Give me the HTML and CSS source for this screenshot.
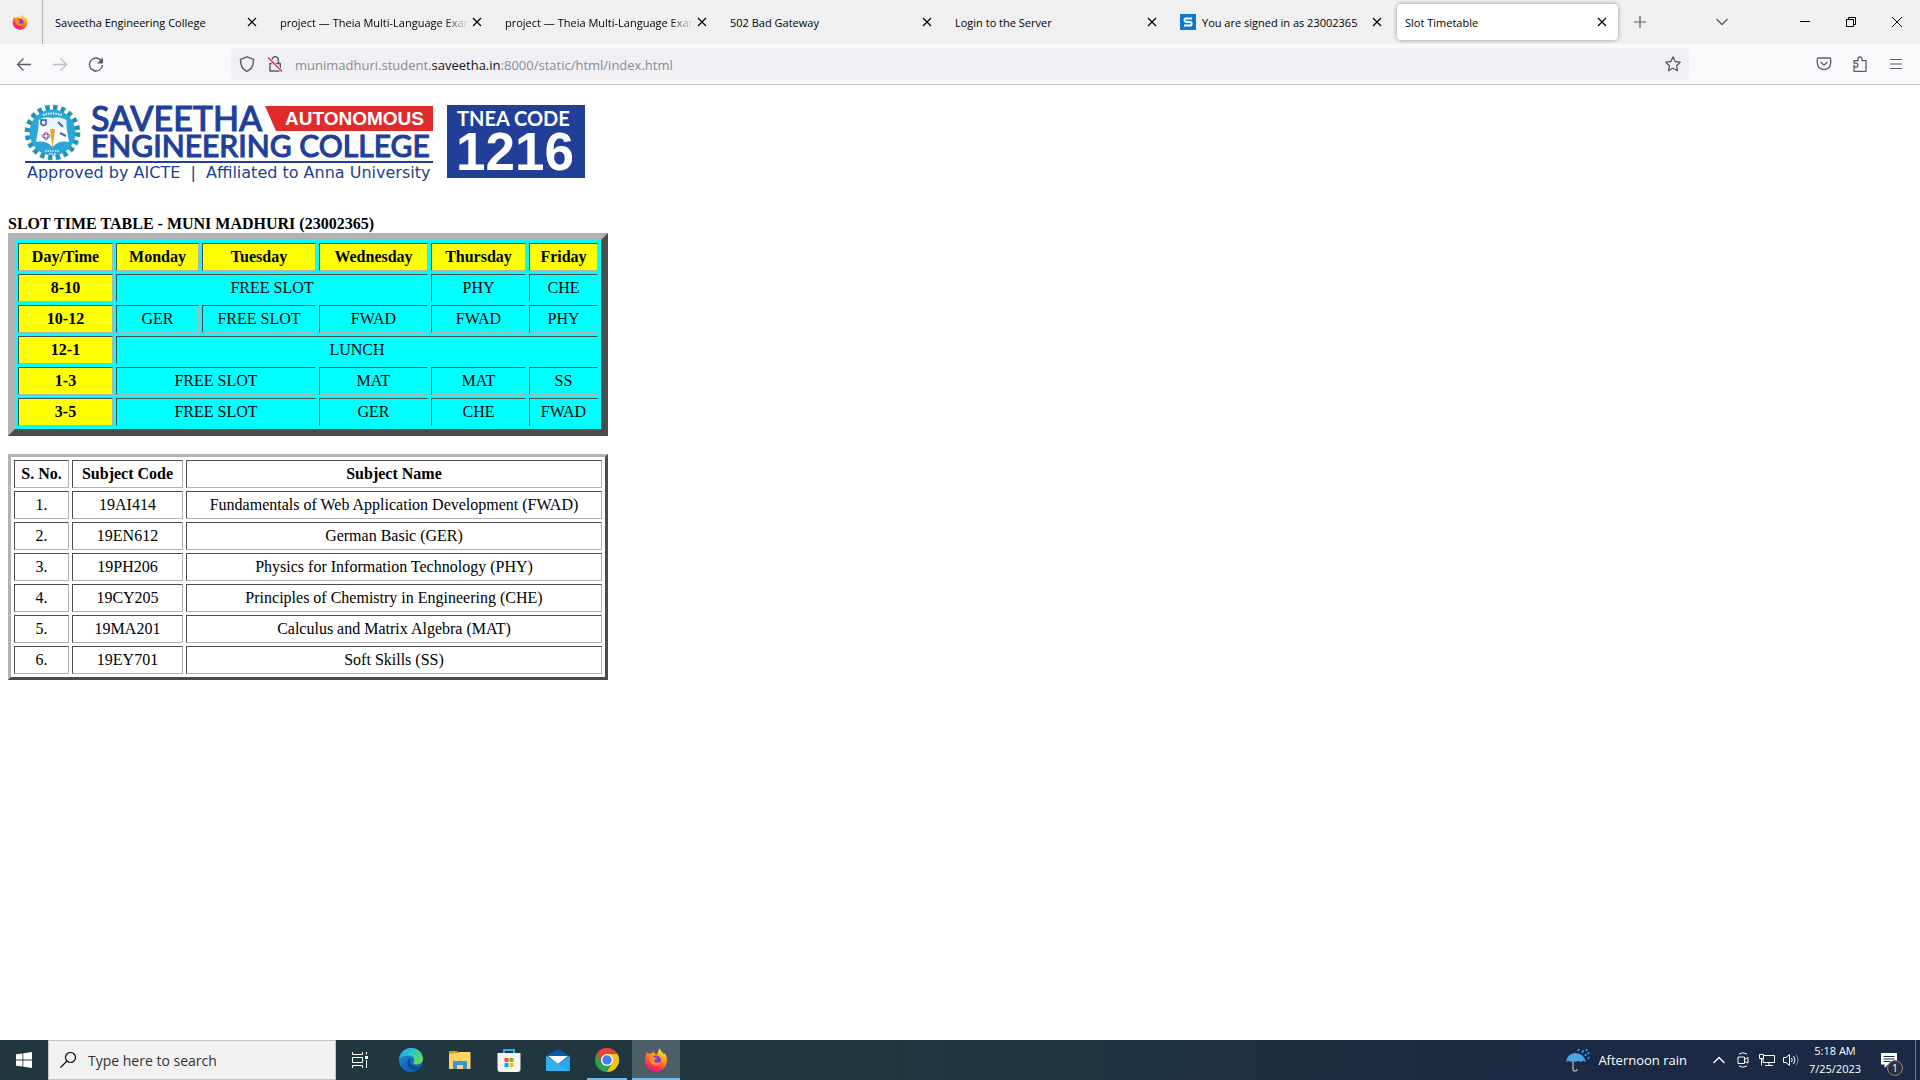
FILE: index.html
```html
<!DOCTYPE html>
<html lang="en">
<head>
<meta charset="utf-8">
<title>Slot Timetable</title>
<link rel="stylesheet" href="styles.css">
</head>
<body>
<svg class="defs" aria-hidden="true">
  <defs>
    <linearGradient id="fox" x1="0.8" y1="0" x2="0.3" y2="1"><stop offset="0" stop-color="#fff44f"/><stop offset="0.4" stop-color="#ff980e"/><stop offset="0.75" stop-color="#ff3750"/><stop offset="1" stop-color="#e31587"/></linearGradient>
    <linearGradient id="edge1" x1="0" y1="0" x2="1" y2="0.5"><stop offset="0" stop-color="#1b9de2"/><stop offset="0.5" stop-color="#2cc3d5"/><stop offset="1" stop-color="#62d957"/></linearGradient>
    <linearGradient id="edge2" x1="0" y1="0" x2="0.6" y2="1"><stop offset="0" stop-color="#1b8fdd"/><stop offset="1" stop-color="#0f5cb0"/></linearGradient>
    <symbol id="firefox" viewBox="0 0 24 24">
      <path fill="url(#fox)" d="M2 7c0-1 .8-2.400 1.500-3 0 1 .4 1.600 1 2 .9-.5 2-.6 3-.3C8 4.500 9 3.700 10 3.500 9.500 5 11 6 12.500 6.200c1 0 1.300-1.200 1.500-2.200.2-1.600.9-2.700 2-3.500.2 2 1.300 2.800 2.500 4 .7.700 1.300 1.400 1.600 2l.4-1.500c1.700 2 2.500 4.400 2.500 7.300C23 18.800 18.200 23.500 12 23.500S1 18.700 1 12.500C1 10.400 1.300 8.500 2 7z"/>
      <circle cx="12" cy="12.500" r="5" fill="#7a3ee0"/>
      <path fill="#ff8a1e" d="M5 8c2-.6 3.800 0 5 1.300 1.300.2 2.500.2 3 .7-.5 1.200-2 1.400-2.800 2.200-.2 1.700 1.300 2.800 3 2.500 1.500-.2 2.300-.8 3.300-.2-1 2.400-3 3.500-5.200 3.200C7.500 17.300 4.500 13 5 8z"/>
    </symbol>
    <symbol id="close" viewBox="0 0 10 10"><path d="M1 1l8 8M9 1L1 9" fill="none" stroke="currentColor" stroke-width="1.200"/></symbol>
  </defs>
</svg>

<header class="browser">
  <div class="tabbar">
    <button class="pinned" aria-label="Firefox View"><svg width="16" height="16"><use href="#firefox"/></svg></button>
    <div class="tab"><button class="tab-title">Saveetha Engineering College</button><button class="tab-close" aria-label="Close tab"><svg width="10" height="10"><use href="#close"/></svg></button></div>
    <div class="tab"><button class="tab-title faded">project — Theia Multi-Language Example</button><button class="tab-close" aria-label="Close tab"><svg width="10" height="10"><use href="#close"/></svg></button></div>
    <div class="tab"><button class="tab-title faded">project — Theia Multi-Language Example</button><button class="tab-close" aria-label="Close tab"><svg width="10" height="10"><use href="#close"/></svg></button></div>
    <div class="tab"><button class="tab-title">502 Bad Gateway</button><button class="tab-close" aria-label="Close tab"><svg width="10" height="10"><use href="#close"/></svg></button></div>
    <div class="tab"><button class="tab-title">Login to the Server</button><button class="tab-close" aria-label="Close tab"><svg width="10" height="10"><use href="#close"/></svg></button></div>
    <div class="tab"><svg class="tab-icon" width="16" height="16" viewBox="0 0 16 16"><path fill="#0a7bce" d="M0 0h16v16H0z"/><path d="M12 4.500H6q-1.500 0-1.500 1.500T6 7.900h4q1.600 0 1.600 1.800T10 11.500H4" fill="none" stroke="#fff" stroke-width="2"/></svg><button class="tab-title">You are signed in as 23002365</button><button class="tab-close" aria-label="Close tab"><svg width="10" height="10"><use href="#close"/></svg></button></div>
    <div class="tab active"><button class="tab-title">Slot Timetable</button><button class="tab-close" aria-label="Close tab"><svg width="10" height="10"><use href="#close"/></svg></button></div>
    <button class="icon-btn new-tab" aria-label="New tab"><svg width="12" height="12" viewBox="0 0 12 12"><path d="M6 0v12M0 6h12" stroke="#5b5b66" stroke-width="1.200"/></svg></button>
    <button class="icon-btn all-tabs" aria-label="List all tabs"><svg width="12" height="8" viewBox="0 0 12 8"><path d="M.5 1L6 6.500 11.500 1" fill="none" stroke="#5b5b66" stroke-width="1.300"/></svg></button>
    <div class="window-controls">
      <button aria-label="Minimize"><svg width="10" height="10" viewBox="0 0 10 10"><path d="M0 4.500h10" stroke="#000"/></svg></button>
      <button aria-label="Restore"><svg width="10" height="10" viewBox="0 0 10 10"><path d="M.5 2.500h7v7h-7zM2.500 2.500v-2h7v7h-2" fill="none" stroke="#000"/></svg></button>
      <button aria-label="Close"><svg width="10" height="10" viewBox="0 0 10 10"><path d="M0 0l10 10M10 0L0 10" stroke="#000"/></svg></button>
    </div>
  </div>
  <div class="toolbar">
    <div class="nav">
      <button class="icon-btn" aria-label="Back"><svg width="16" height="16" viewBox="0 0 16 16"><path d="M15 8.500H1.500M7.500 2.500l-6 6 6 6" fill="none" stroke="#5b5b66" stroke-width="1.300"/></svg></button>
      <button class="icon-btn" aria-label="Forward" disabled><svg width="16" height="16" viewBox="0 0 16 16"><path d="M1 8.500h13.500M8.500 2.500l6 6-6 6" fill="none" stroke="#bdbdc3" stroke-width="1.300"/></svg></button>
      <button class="icon-btn" aria-label="Reload"><svg width="16" height="16" viewBox="0 0 16 16"><path d="M13.500 5A6.500 6.500 0 1 0 14.500 9" fill="none" stroke="#5b5b66" stroke-width="1.400"/><path d="M15 1.500v6H9z" fill="#5b5b66"/></svg></button>
    </div>
    <div class="urlbar">
      <svg width="16" height="16" viewBox="0 0 16 16"><path d="M8 .8l6.500 2.500C14.700 8.500 13 13 8 15.300 3 13 1.300 8.500 1.500 3.300z" fill="none" stroke="#5b5b66" stroke-width="1.400" stroke-linejoin="round"/></svg>
      <svg width="16" height="16" viewBox="0 0 16 16"><path d="M3 7.500h10.300V15H3zM5 7.500V4a3.200 3.200 0 0 1 6.400 0v3.500" fill="none" stroke="#5b5b66" stroke-width="1.400" stroke-linejoin="round"/><path d="M1 1.500l14 14" stroke="#f0f0f4" stroke-width="3"/><path d="M1 1.500l14 14" stroke="#e22850" stroke-width="1.300"/></svg>
      <div class="url" role="textbox" aria-label="Address" contenteditable="true" spellcheck="false">munimadhuri.student.<span class="domain">saveetha.in</span>:8000/static/html/index.html</div>
      <button class="icon-btn star" aria-label="Bookmark this page"><svg width="16" height="16" viewBox="0 0 16 16"><path d="M8 .9l2.200 4.600 5 .7-3.600 3.500.9 5L8 12.300l-4.500 2.400.9-5L.8 6.200l5-.7z" fill="none" stroke="#5b5b66" stroke-width="1.300" stroke-linejoin="round"/></svg></button>
    </div>
    <div class="tools">
      <button class="icon-btn" aria-label="Save to Pocket"><svg width="16" height="16" viewBox="0 0 16 16"><path d="M2.500 2h11q1.200 0 1.200 1.200V7a6.700 6.700 0 0 1-13.400 0V3.200Q1.300 2 2.500 2z" fill="none" stroke="#5b5b66" stroke-width="1.300"/><path d="M4.500 6L8 9.200 11.500 6" fill="none" stroke="#5b5b66" stroke-width="1.300"/></svg></button>
      <button class="icon-btn" aria-label="Extensions"><svg width="16" height="16" viewBox="0 0 16 16"><path d="M2 8.800V15.300H14V4.700H10V3a2 2 0 0 0-4 0V4.700H2V7.200H4a1.900 1.900 0 0 1 0 3.800H2" fill="none" stroke="#5b5b66" stroke-width="1.300" stroke-linejoin="round"/></svg></button>
      <button class="icon-btn" aria-label="Open application menu"><svg width="12" height="12" viewBox="0 0 12 12"><path d="M0 1.500h12M0 6h12M0 10.500h12" stroke="#5b5b66" stroke-width="1.200"/></svg></button>
    </div>
  </div>
</header>

<main class="page">
  <svg class="logo" viewBox="0 0 600 122" role="img" aria-label="Saveetha Engineering College">
    <circle cx="44.500" cy="39.500" r="25" fill="none" stroke="#8fcb6b" stroke-width="6" stroke-dasharray="4.500 3.354"/>
    <circle cx="44.500" cy="39.500" r="24.700" fill="none" stroke="#1f8fc6" stroke-width="5.400" stroke-dasharray="3.900 3.860"/>
    <circle cx="44.500" cy="39.500" r="23" fill="#2ba6d8"/>
    <path d="M31 32q7-3 13.500 3 6.500-6 13.500-3l3 17q-10-2-16.500 5-6.500-7-16.500-5z" fill="#fff"/>
    <path d="M44.500 25q-7-2-14 2v7q7-3 14 2 7-5 14-2v-7q-7-4-14-2z" fill="#e6f3f8"/>
    <path d="M33 27h5v4q-2.500 3-5 0z" fill="none" stroke="#2556a0" stroke-width="1.400"/>
    <ellipse cx="38" cy="43" rx="4" ry="2" fill="none" stroke="#8750a2"/><ellipse cx="38" cy="43" rx="2" ry="4" fill="none" stroke="#8750a2"/>
    <path d="M50 29l5 5m-3 6l6 3" stroke="#3c6bb0" stroke-width="2"/>
    <path d="M42 36h5l-1 8-1.500 12L43 44z" fill="#f1a32c"/>
    <path d="M35 22q9.500-3 19 0" fill="none" stroke="#e8f6fb" stroke-width="2" stroke-dasharray="1.500 1"/>
    <path d="M37 58h15M41 61h7" stroke="#e8f6fb" stroke-width="1.500" stroke-dasharray="1.500 1"/>
    <text class="brand" x="83" y="38" font-size="34">SAVEETHA</text>
    <text class="brand" x="83" y="64" font-size="30">ENGINEERING COLLEGE</text>
    <path d="M257 13h168v25H268z" fill="#e12a2b"/>
    <text class="autonomous" x="277" y="32" font-size="19">AUTONOMOUS</text>
    <path d="M17 68h408v2H17z" fill="#213f99"/>
    <text class="approved" x="19" y="85" font-size="16">Approved by AICTE  |  Affiliated to Anna University</text>
    <path d="M439 12h138v73H439z" fill="#213f99"/>
    <text class="code-label" x="449" y="33" font-size="20">TNEA CODE</text>
    <text class="code" x="448" y="77" font-size="53">1216</text>
  </svg>

  <table class="slots">
    <caption>SLOT TIME TABLE - MUNI MADHURI (23002365)</caption>
    <colgroup><col class="c-day"><col class="c-mon"><col class="c-tue"><col class="c-wed"><col class="c-day"><col class="c-fri"></colgroup>
    <tr><th>Day/Time</th><th>Monday</th><th>Tuesday</th><th>Wednesday</th><th>Thursday</th><th>Friday</th></tr>
    <tr><th>8-10</th><td colspan="3">FREE SLOT</td><td>PHY</td><td>CHE</td></tr>
    <tr><th>10-12</th><td>GER</td><td>FREE SLOT</td><td>FWAD</td><td>FWAD</td><td>PHY</td></tr>
    <tr><th>12-1</th><td colspan="5">LUNCH</td></tr>
    <tr><th>1-3</th><td colspan="2">FREE SLOT</td><td>MAT</td><td>MAT</td><td>SS</td></tr>
    <tr><th>3-5</th><td colspan="2">FREE SLOT</td><td>GER</td><td>CHE</td><td>FWAD</td></tr>
  </table>

  <table class="subjects">
    <colgroup><col class="c-no"><col class="c-code"><col></colgroup>
    <tr><th>S. No.</th><th>Subject Code</th><th>Subject Name</th></tr>
    <tr><td>1.</td><td>19AI414</td><td>Fundamentals of Web Application Development (FWAD)</td></tr>
    <tr><td>2.</td><td>19EN612</td><td>German Basic (GER)</td></tr>
    <tr><td>3.</td><td>19PH206</td><td>Physics for Information Technology (PHY)</td></tr>
    <tr><td>4.</td><td>19CY205</td><td>Principles of Chemistry in Engineering (CHE)</td></tr>
    <tr><td>5.</td><td>19MA201</td><td>Calculus and Matrix Algebra (MAT)</td></tr>
    <tr><td>6.</td><td>19EY701</td><td>Soft Skills (SS)</td></tr>
  </table>
</main>

<footer class="taskbar">
  <button class="start" aria-label="Start"><svg width="16" height="16" viewBox="0 0 16 16"><path fill="#fff" d="M0 2.300l6.500-.9v6.200H0zM7.300 1.200L16 0v7.600H7.300zM0 8.400h6.500v6.200L0 13.700zM7.300 8.400H16V16l-8.700-1.200z"/></svg></button>
  <label class="search">
    <svg width="16" height="16" viewBox="0 0 16 16"><circle cx="10.500" cy="5.500" r="5" fill="none" stroke="#111" stroke-width="1.200"/><path d="M7 9L.5 15.500" stroke="#111" stroke-width="1.300"/></svg>
    <input type="text" placeholder="Type here to search" aria-label="Search">
  </label>
  <nav class="apps">
    <button aria-label="Task View"><svg width="16" height="16" viewBox="0 0 16 16"><path d="M.5 0v2.500h10V0M.5 16v-2.500h10V16M.5 5.500h10v5H.5zM14.500 0v2.500M14.500 8v8" fill="none" stroke="#fff"/><path d="M13 4h3v3h-3z" fill="#fff"/></svg></button>
    <button class="edge" aria-label="Microsoft Edge"><svg width="24" height="24" viewBox="0 0 24 24"><circle cx="12" cy="12" r="12" fill="url(#edge2)"/><path fill="url(#edge1)" d="M0 11.500C.5 5 5.500 0 12 0s12 4.800 12 10.500c0 3.800-2.800 6-6 6-3.500 0-4.300-1.400-3.500-2.500 2-2.700-.3-6.500-4.500-6.500C5.500 7.500 2 9 0 11.500z"/><path fill="#0c4a8e" d="M9.500 11C6.500 15 9 21 15 21.500c3 .2 5.700-1 7.200-3.200-3.500 1.500-10 .5-11-4.300-.2-1.200 0-2 .5-3-.8-.3-1.600-.3-2.200 0z"/></svg></button>
    <button aria-label="File Explorer"><svg width="24" height="24" viewBox="0 0 24 24"><path fill="#d9a00f" d="M1 3h8l2 2v3H1z"/><path fill="#ffd366" d="M1 6l9-1 1-1h11.500v17H1z"/><path fill="#3a94d9" d="M5 21v-7q0-1 1-1h12q1 0 1 1v7h-4v-4H9v4z"/></svg></button>
    <button aria-label="Microsoft Store"><svg width="24" height="24" viewBox="0 0 24 24"><path fill="none" stroke="#2bb0f0" stroke-width="2" d="M7 6V2h10v4"/><path fill="#f5f5f5" d="M.5 5h23v16q0 3-3 3h-17q-3 0-3-3z"/><path fill="#f25022" d="M7.500 10h4v4h-4z"/><path fill="#7fba00" d="M12.500 10h4v4h-4z"/><path fill="#00a4ef" d="M7.500 15h4v4h-4z"/><path fill="#ffb900" d="M12.500 15h4v4h-4z"/></svg></button>
    <button aria-label="Mail"><svg width="24" height="24" viewBox="0 0 24 24"><path fill="#0f5aa8" d="M0 8l12-7 12 7v6H0z"/><path fill="#fff" d="M2 8h20l-10 8z"/><path fill="#2aa5ea" d="M0 8l12 8 12-8v15H0z"/><path fill="#42bdf5" d="M0 8l24 15H0z" opacity="0.500"/></svg></button>
    <button class="running" aria-label="Google Chrome"><svg width="24" height="24" viewBox="0 0 24 24"><circle cx="12" cy="12" r="12" fill="#2da04a"/><path fill="#ea4335" d="M1.600 6A12 12 0 0 1 22.400 6H12L7 15z"/><path fill="#fbc116" d="M22.400 6A12 12 0 0 1 12 24l5.200-9L12 6z"/><circle cx="12" cy="12" r="6" fill="#fff"/><circle cx="12" cy="12" r="4.700" fill="#3b80ee"/></svg></button>
    <button class="running current" aria-label="Firefox"><svg width="24" height="24"><use href="#firefox"/></svg></button>
  </nav>
  <div class="tray">
    <button class="weather"><svg width="24" height="24" viewBox="0 0 24 24"><path d="M8 12v9q0 2 2 2t2-2" transform="translate(-1 0)" fill="none" stroke="#9aa3ad" stroke-width="1.500"/><path fill="#4ea3e6" d="M0 14Q1 5.500 9.500 5 18 5.500 20 14q-3-2-5.500 0-2.500-2-5 0-2.500-2-4.500 0-2.500-2-5 0z"/><path d="M12 3l1-2M16 5l1.500-3M20 3l1-2M19 8l1-2M22 6l1-2M22 11l1-2" stroke="#4ea3e6" stroke-width="1.600"/></svg>Afternoon rain</button>
    <button class="tray-icon" aria-label="Show hidden icons"><svg width="12" height="8" viewBox="0 0 12 8"><path d="M.5 7L6 1.500 11.500 7" fill="none" stroke="#fff" stroke-width="1.300"/></svg></button>
    <button class="tray-icon" aria-label="Meet Now"><svg width="12" height="16" viewBox="0 0 12 16"><path d="M1 5h6.500v6.500H1zM7.500 7.500L11 5.500v5.500L7.500 9.500M2 2q4-2.500 8 0M2 14q4 2.500 8 0" fill="none" stroke="#fff"/></svg></button>
    <button class="tray-icon" aria-label="Network"><svg width="16" height="16" viewBox="0 0 16 16"><path d="M5 3.500h10.500v7H4V7M10 10.500V13M6 13.500h8M.5 2.500h4v4h-4zM2.500 6.500v7" fill="none" stroke="#fff"/></svg></button>
    <button class="tray-icon" aria-label="Volume"><svg width="16" height="16" viewBox="0 0 16 16"><path d="M.5 5.500H3L6.500 2.500v11L3 10.500H.5zM8.500 6q1.500 2 0 4M10.500 4q3 4 0 8" fill="none" stroke="#fff"/><path d="M13 2.500q4 5.500 0 11" fill="none" stroke="#8a94a5"/></svg></button>
    <button class="clock"><span>5:18 AM</span><span>7/25/2023</span></button>
    <button class="notes" aria-label="1 new notification"><svg width="16" height="16" viewBox="0 0 16 16"><path fill="#fff" d="M0 1h16v11.500H7L3.500 16v-3.500H0z"/><path d="M2.500 4.500h11M2.500 7h11M2.500 9.500h7" stroke="#1c2a44"/></svg><span class="badge">1</span></button>
  </div>
</footer>
</body>
</html>
```
FILE: styles.css
```css
* { box-sizing: border-box; }

body {
  margin: 0;
  min-height: 100vh;
  display: flex;
  flex-direction: column;
  background: #fff;
  color: #000;
  font-family: "Open Sans", "Noto Sans", sans-serif;
  font-size: 12px;
}

button, input {
  margin: 0;
  padding: 0;
  border: 0;
  background: none;
  color: inherit;
  font: inherit;
}

svg { display: block; flex: none; }
.defs { position: absolute; width: 0; height: 0; }

/* Browser tabs */
.tabbar {
  display: flex;
  align-items: center;
  height: 44px;
  background: #f0f0f0;
}
.pinned {
  display: flex;
  align-items: center;
  align-self: stretch;
  width: 43px;
  margin-right: 4px;
  padding-left: 12px;
  border-right: 1px solid #b2b2b2;
}
.tab {
  display: flex;
  align-items: center;
  flex: 0 1 221px;
  min-width: 0;
  height: 36px;
  margin-right: 4px;
  padding: 0 8px;
  border-radius: 4px;
}
.tab.active { background: #fff; box-shadow: 0 0 4px rgba(0, 0, 0, 0.4); }
.tab-icon { margin-right: 6px; }
.tab-title {
  flex: 1;
  min-width: 0;
  overflow: hidden;
  padding-top: 1px;
  font-size: 11px;
  line-height: 20px;
  text-align: left;
  white-space: nowrap;
}
.tab-title.faded {
  -webkit-mask-image: linear-gradient(to left, transparent, #000 24px);
  mask-image: linear-gradient(to left, transparent, #000 24px);
}
.tab-close {
  display: flex;
  align-items: center;
  justify-content: center;
  width: 16px;
  height: 24px;
}
.icon-btn {
  display: flex;
  align-items: center;
  justify-content: center;
  width: 36px;
  height: 32px;
}
.all-tabs { margin-left: auto; margin-right: 42px; }
.window-controls { display: flex; }
.window-controls button {
  display: flex;
  align-items: center;
  justify-content: center;
  width: 46px;
  height: 44px;
}

/* Address row */
.toolbar {
  display: flex;
  align-items: center;
  justify-content: space-between;
  height: 41px;
  padding: 0 6px;
  border-bottom: 1px solid #ccc;
  background: #f9f9fb;
}
.nav, .tools { display: flex; }
.urlbar {
  display: flex;
  align-items: center;
  gap: 12px;
  flex: 0 1 1458px;
  height: 32px;
  padding-left: 8px;
  border-radius: 4px;
  background: #f0f0f4;
}
.url { flex: 1; padding-top: 2px; color: #8b8b91; font-size: 13px; line-height: 20px; white-space: nowrap; overflow: hidden; }
.domain { color: #15141a; }
.star { width: 32px; }

/* Web page */
.page {
  flex: 1;
  padding: 8px;
  font-family: "Liberation Serif", "Times New Roman", serif;
  font-size: 16px;
  line-height: 18px;
}
.logo { width: 600px; height: 122px; }
.brand { font-family: Lato, sans-serif; font-weight: 500; fill: #213f99; stroke: #213f99; stroke-width: 1px; }
.autonomous { font-family: "Liberation Sans", Arial, sans-serif; font-weight: 700; fill: #fff; }
.approved { font-family: "DejaVu Sans", sans-serif; fill: #213f99; white-space: pre; }
.code-label { font-family: Lato, sans-serif; font-weight: 700; fill: #fff; }
.code { font-family: "Liberation Sans", Arial, sans-serif; font-weight: 700; fill: #fff; }

table {
  width: 600px;
  table-layout: fixed;
  border-collapse: separate;
  border-spacing: 3px;
  border-style: solid;
  border-color: #b2b2b2 #4c4c4c #4c4c4c #b2b2b2;
  text-align: center;
}
caption { font-weight: 700; text-align: left; white-space: nowrap; }
th, td {
  padding: 4px;
  border: 1px solid;
  border-color: #4c4c4c #b2b2b2 #b2b2b2 #4c4c4c;
  white-space: nowrap;
}
.slots { border-width: 7px; background: #0ff; }
.slots th { background: #ff0; }
.subjects { margin-top: 18px; border-width: 3px; }
.c-day { width: 95px; }
.c-mon { width: 83px; }
.c-tue { width: 114px; }
.c-wed { width: 109px; }
.c-fri { width: 69px; }
.c-no { width: 55px; }
.c-code { width: 111px; }

/* Windows taskbar */
.taskbar {
  display: flex;
  height: 40px;
  background: linear-gradient(90deg, #20373f, #20373f 45%, #1b2944 80%);
  color: #fff;
}
.start {
  display: flex;
  align-items: center;
  justify-content: center;
  width: 48px;
}
.search {
  display: flex;
  align-items: center;
  gap: 12px;
  flex: 0 1 288px;
  padding: 0 11px;
  border: 1px solid #c4c4c4;
  background: #f1f1f1;
}
.search input { flex: 1; min-width: 0; font-size: 14px; outline: 0; }
.search input::placeholder { color: #333; opacity: 1; }
.apps { display: flex; gap: 1px; }
.apps button {
  display: flex;
  align-items: center;
  justify-content: center;
  width: 48px;
  border-bottom: 2px solid transparent;
  border-top: 2px solid transparent;
}
.apps .edge { margin-left: 2px; }
.apps .running {
  background: linear-gradient(#76b9ed, #76b9ed) bottom / 40px 2px no-repeat border-box;
}
.apps .current {
  background: linear-gradient(#76b9ed, #76b9ed) bottom / 48px 2px no-repeat border-box, #4c5f67;
  background-clip: border-box;
}
.tray { display: flex; align-items: center; margin-left: auto; padding-right: 4px; border-right: 1px solid #6f7a8c; margin-right: 4px; }
.tray button { display: flex; align-items: center; justify-content: center; height: 40px; }
.weather { gap: 8px; margin-right: 20px; font-size: 13px; }
.tray-icon { width: 24px; }
.tray .clock { flex-direction: column; width: 64px; font-size: 11px; line-height: 18px; }
.notes { position: relative; width: 44px; }
.badge {
  position: absolute;
  right: 8px;
  bottom: 4px;
  width: 16px;
  height: 16px;
  border: 1px solid #888;
  border-radius: 50%;
  background: #2b2f38;
  font-size: 11px;
  line-height: 14px;
  text-align: center;
}
```
